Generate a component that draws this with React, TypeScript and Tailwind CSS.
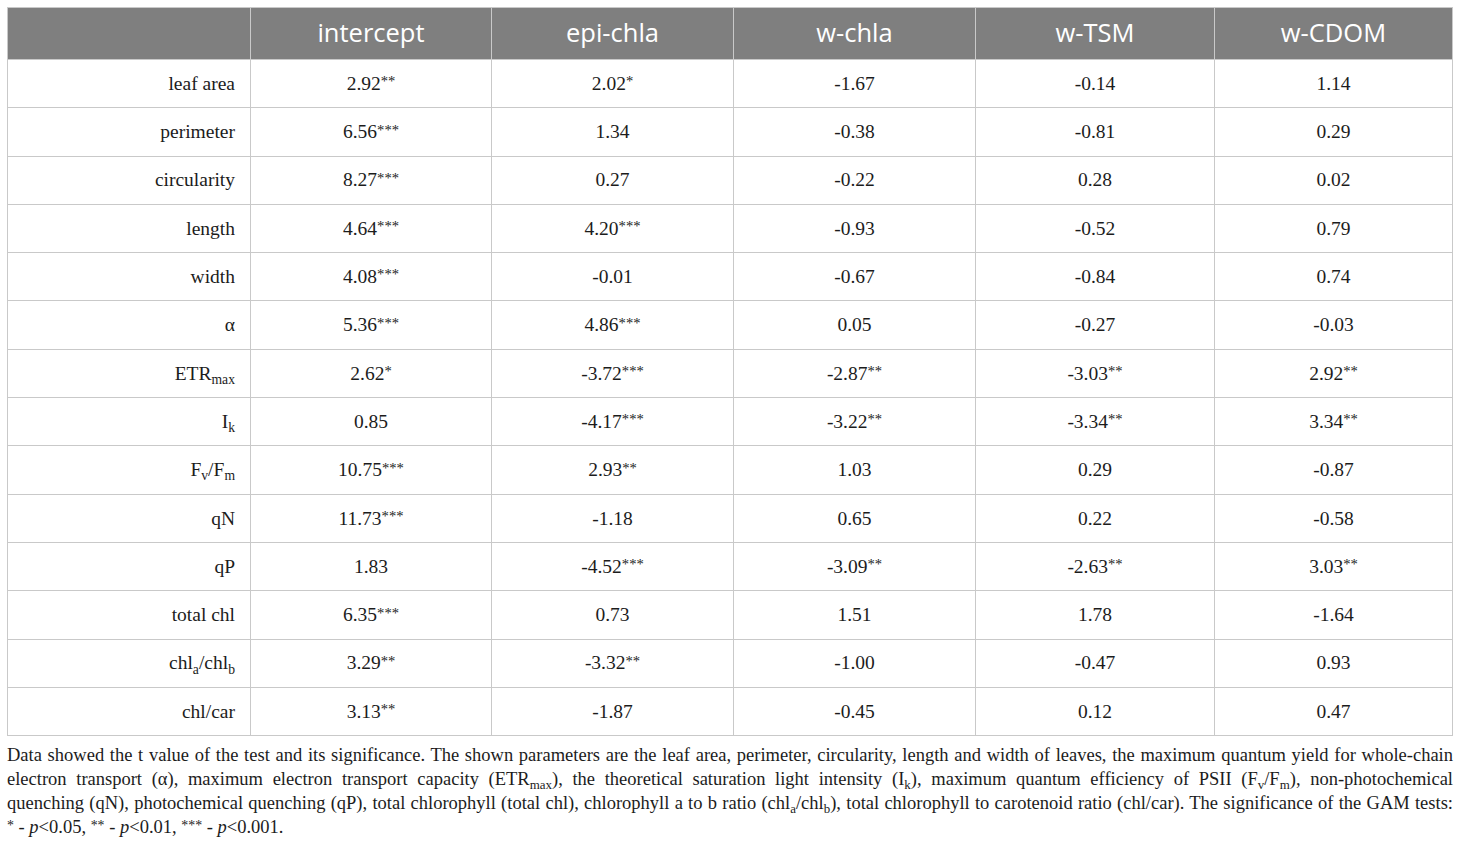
import React from 'react';

type Cell = React.ReactNode;

const S: React.FC<{ children: React.ReactNode }> = ({ children }) => (
    <span className="relative top-[0.3em] text-[0.7em] leading-none">{children}</span>
);

const Star: React.FC<{ children: React.ReactNode }> = ({ children }) => (
    <span className="relative top-[-0.25em] text-[0.75em] leading-none">{children}</span>
);

const headers = ['', 'intercept', 'epi-chla', 'w-chla', 'w-TSM', 'w-CDOM'];

const rows: Cell[][] = [
    ['leaf area', '2.92**', '2.02*', '-1.67', '-0.14', '1.14'],
    ['perimeter', '6.56***', '1.34', '-0.38', '-0.81', '0.29'],
    ['circularity', '8.27***', '0.27', '-0.22', '0.28', '0.02'],
    ['length', '4.64***', '4.20***', '-0.93', '-0.52', '0.79'],
    ['width', '4.08***', '-0.01', '-0.67', '-0.84', '0.74'],
    ['α', '5.36***', '4.86***', '0.05', '-0.27', '-0.03'],
    [<>ETR<S>max</S></>, '2.62*', '-3.72***', '-2.87**', '-3.03**', '2.92**'],
    [<>I<S>k</S></>, '0.85', '-4.17***', '-3.22**', '-3.34**', '3.34**'],
    [<>F<S>v</S>/F<S>m</S></>, '10.75***', '2.93**', '1.03', '0.29', '-0.87'],
    ['qN', '11.73***', '-1.18', '0.65', '0.22', '-0.58'],
    ['qP', '1.83', '-4.52***', '-3.09**', '-2.63**', '3.03**'],
    ['total chl', '6.35***', '0.73', '1.51', '1.78', '-1.64'],
    [<>chl<S>a</S>/chl<S>b</S></>, '3.29**', '-3.32**', '-1.00', '-0.47', '0.93'],
    ['chl/car', '3.13**', '-1.87', '-0.45', '0.12', '0.47'],
];

// split a trailing run of asterisks off so it can sit raised
const Val: React.FC<{ v: Cell }> = ({ v }) => {
    if (typeof v !== 'string') return <>{v}</>;
    const m = v.match(/^([^*]*)(\*+)$/);
    if (!m) return <>{v}</>;
    return (
        <>
            {m[1]}
            <Star>{m[2]}</Star>
        </>
    );
};

const justified = 'text-justify [text-align-last:justify] whitespace-nowrap';

const App: React.FC = () => {
    return (
        <div className="w-[1460px] h-[847px] bg-white px-[7px] pt-[7px] text-[#1c1c1c]">
            <table className="w-[1445px] border-collapse table-fixed font-['Liberation_Serif',serif]">
                <colgroup>
                    <col className="w-[243px]" />
                    <col className="w-[241px]" />
                    <col className="w-[242px]" />
                    <col className="w-[242px]" />
                    <col className="w-[239px]" />
                    <col className="w-[238px]" />
                </colgroup>
                <thead>
                    <tr className="h-[52px] bg-[#7f7f7f]">
                        {headers.map((h, i) => (
                            <th
                                key={i}
                                className="border border-[#c9c9c9] text-center font-normal text-white text-[25.5px] leading-none font-['Open_Sans',sans-serif] pb-[1px]"
                            >
                                {h}
                            </th>
                        ))}
                    </tr>
                </thead>
                <tbody>
                    {rows.map((r, ri) => (
                        <tr key={ri} className="h-[48.3px]">
                            {r.map((c, ci) => (
                                <td
                                    key={ci}
                                    className={`border border-[#c9c9c9] text-[19.5px] leading-none ${ci === 0 ? 'text-right pr-[15px]' : 'text-center'}`}
                                >
                                    <Val v={c} />
                                </td>
                            ))}
                        </tr>
                    ))}
                </tbody>
            </table>
            <div className="mt-[7px] text-[18.5px] leading-[24px] font-['Liberation_Serif',serif]">
                <p className={justified}>
                    Data showed the t value of the test and its significance. The shown parameters are the leaf area, perimeter, circularity, length and width of leaves, the maximum quantum yield for whole-chain
                </p>
                <p className={justified}>
                    electron transport (α), maximum electron transport capacity (ETR<S>max</S>), the theoretical saturation light intensity (I<S>k</S>), maximum quantum efficiency of PSII (F<S>v</S>/F<S>m</S>), non-photochemical
                </p>
                <p className={justified}>
                    quenching (qN), photochemical quenching (qP), total chlorophyll (total chl), chlorophyll a to b ratio (chl<S>a</S>/chl<S>b</S>), total chlorophyll to carotenoid ratio (chl/car). The significance of the GAM tests:
                </p>
                <p>
                    <Star>*</Star> - <i>p</i>&lt;0.05, <Star>**</Star> - <i>p</i>&lt;0.01, <Star>***</Star> - <i>p</i>&lt;0.001.
                </p>
            </div>
        </div>
    );
};

export default App;
